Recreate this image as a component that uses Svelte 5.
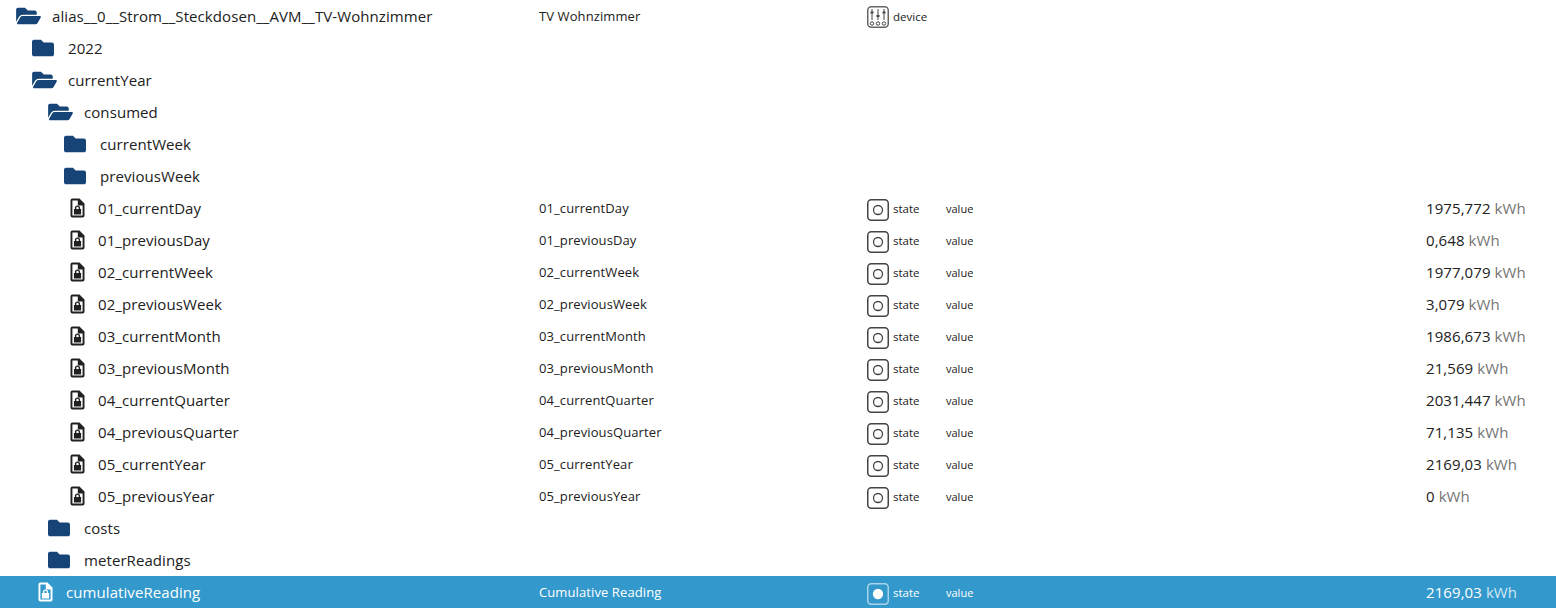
<script>
  const names = ['currentDay','previousDay','currentWeek','previousWeek','currentMonth','previousMonth','currentQuarter','previousQuarter','currentYear','previousYear'];
  const prefixes = ['01','01','02','02','03','03','04','04','05','05'];
  const values = ['1975,772','0,648','1977,079','3,079','1986,673','21,569','2031,447','71,135','2169,03','0'];
  const states = names.map((n, i) => ({
    kind: 'file', depth: 3, name: `${prefixes[i]}_${n}`, label: `${prefixes[i]}_${n}`, type: 'state', role: 'value', value: values[i]
  }));
  const rows = [
    { kind: 'open', depth: 0, name: 'alias__0__Strom__Steckdosen__AVM__TV-Wohnzimmer', label: 'TV Wohnzimmer', type: 'device' },
    { kind: 'folder', depth: 1, name: '2022' },
    { kind: 'open', depth: 1, name: 'currentYear' },
    { kind: 'open', depth: 2, name: 'consumed' },
    { kind: 'folder', depth: 3, name: 'currentWeek' },
    { kind: 'folder', depth: 3, name: 'previousWeek' },
    ...states,
    { kind: 'folder', depth: 2, name: 'costs' },
    { kind: 'folder', depth: 2, name: 'meterReadings' },
    { kind: 'file', depth: 1, name: 'cumulativeReading', label: 'Cumulative Reading', type: 'state', role: 'value', value: '2169,03', selected: true }
  ];
</script>

<div class="tree">
  {#each rows as row}
    <div class="row" class:selected={row.selected}>
      <div class="name" style="padding-left: {16 * row.depth + 16}px">
        {#if row.kind === 'open'}
          <svg class="ic-open" viewBox="0 0 576 512"><path d="M572.694 292.093L500.27 416.248A63.997 63.997 0 0 1 444.989 448H45.025c-18.523 0-30.064-20.093-20.731-36.093l72.424-124.155A64 64 0 0 1 152 256h399.964c18.523 0 30.064 20.093 20.73 36.093zM152 224h328v-48c0-26.51-21.49-48-48-48H272l-64-64H48C21.49 64 0 85.49 0 112v278.046l69.077-118.418C86.214 242.25 117.989 224 152 224z"/></svg>
        {:else if row.kind === 'folder'}
          <svg class="ic-folder" viewBox="0 0 512 512"><path d="M464 128H272l-64-64H48C21.49 64 0 85.49 0 112v288c0 26.51 21.49 48 48 48h416c26.51 0 48-21.49 48-48V176c0-26.51-21.49-48-48-48z"/></svg>
        {:else}
          <svg class="ic-file" viewBox="0 0 15 20">
            <path fill-rule="evenodd" d="M2.300 .5H9.500L14.500 5.500V17.700A1.800 1.800 0 0 1 12.700 19.500H2.300A1.800 1.800 0 0 1 .5 17.700V2.300A1.800 1.800 0 0 1 2.300 .5ZM2.400 2.400V17.600H12.600V7.400H7.800V2.400Z"/>
            <path fill-rule="evenodd" d="M3.900 11H4.900V10A2.600 2.600 0 0 1 10.100 10V11H11.100V16.400H3.900ZM6.300 11H8.700V10A1.200 1.200 0 0 0 6.300 10Z"/>
          </svg>
        {/if}
        <span class="text">{row.name}</span>
      </div>
      <div class="label">{row.label ?? ''}</div>
      <div class="type">
        {#if row.type === 'device'}
          <svg class="type-icon dev" viewBox="0 0 22 22">
            <rect x=".75" y=".75" width="20.500" height="20.500" rx="3.500" fill="none" stroke="#666" stroke-width="1.500"/>
            <g fill="none" stroke="#444" stroke-width="1">
              <path d="M5 3v11M11 3v11M17 3v11"/>
              <circle cx="5" cy="17.500" r="1.700"/><circle cx="11" cy="17.500" r="1.700"/><circle cx="17" cy="17.500" r="1.700"/>
            </g>
            <g fill="#444"><rect x="3.500" y="5.500" width="3" height="2"/><rect x="9.500" y="9" width="3" height="2"/><rect x="15.500" y="5.500" width="3" height="2"/></g>
          </svg>
        {:else if row.type === 'state'}
          <svg class="type-icon" viewBox="0 0 22 22">
            <rect class="box" x=".75" y=".75" width="20.500" height="20.500" rx="3.500"/>
            <circle class="dot" cx="11" cy="11" r="4.500"/>
          </svg>
        {/if}
        {#if row.type}<span class="type-text">{row.type}</span>{/if}
      </div>
      <div class="role">{row.role ?? ''}</div>
      <div class="value">
        {#if row.value}{row.value} <span class="unit">kWh</span>{/if}
      </div>
    </div>
  {/each}
</div>

<style>
  :global(body) {
    margin: 0;
    background: #fff;
  }
  .tree {
    font-family: "Open Sans", "Noto Sans", sans-serif;
    color: #212121;
    height: 608px;
    overflow: hidden;
  }
  .row {
    display: grid;
    grid-template-columns: 539px 328px 79px 480px 1fr;
    height: 32px;
    align-items: center;
  }
  .selected {
    background: #3399cc;
    color: #fff;
  }
  .name {
    display: flex;
    align-items: center;
    min-width: 0;
    white-space: nowrap;
  }
  .text {
    font-size: 15px;
    letter-spacing: 0.08px;
    line-height: 32px;
  }
  svg {
    flex: none;
    display: block;
  }
  .ic-open {
    width: 25px;
    height: 22px;
    margin-right: 11px;
    fill: #164477;
  }
  .ic-folder {
    width: 22px;
    height: 22px;
    margin-right: 14px;
    fill: #164477;
  }
  .ic-file {
    width: 15px;
    height: 20px;
    margin-left: 6px;
    margin-right: 13px;
    fill: #212121;
  }
  .selected .ic-file {
    fill: #fff;
  }
  .label {
    font-size: 13px;
    letter-spacing: 0.1px;
  }
  .type {
    display: flex;
    align-items: center;
    gap: 4px;
    font-size: 11.500px;
  }
  .type-text {
    margin-top: 1px;
  }
  .type-icon {
    width: 22px;
    height: 22px;
    margin-top: 3px;
  }
  .dev {
    margin-top: 1px;
  }
  .box {
    fill: none;
    stroke: #444;
    stroke-width: 1.500;
  }
  .dot {
    fill: none;
    stroke: #444;
    stroke-width: 1.300;
  }
  .selected .box {
    stroke: #a8d4ea;
  }
  .selected .dot {
    fill: #fff;
    stroke: #fff;
  }
  .role {
    font-size: 11px;
    margin-top: 1px;
  }
  .value {
    font-size: 15px;
    letter-spacing: 0.08px;
    white-space: nowrap;
  }
  .unit {
    color: #757575;
  }
  .selected .unit {
    color: #cfe6f3;
  }
</style>
